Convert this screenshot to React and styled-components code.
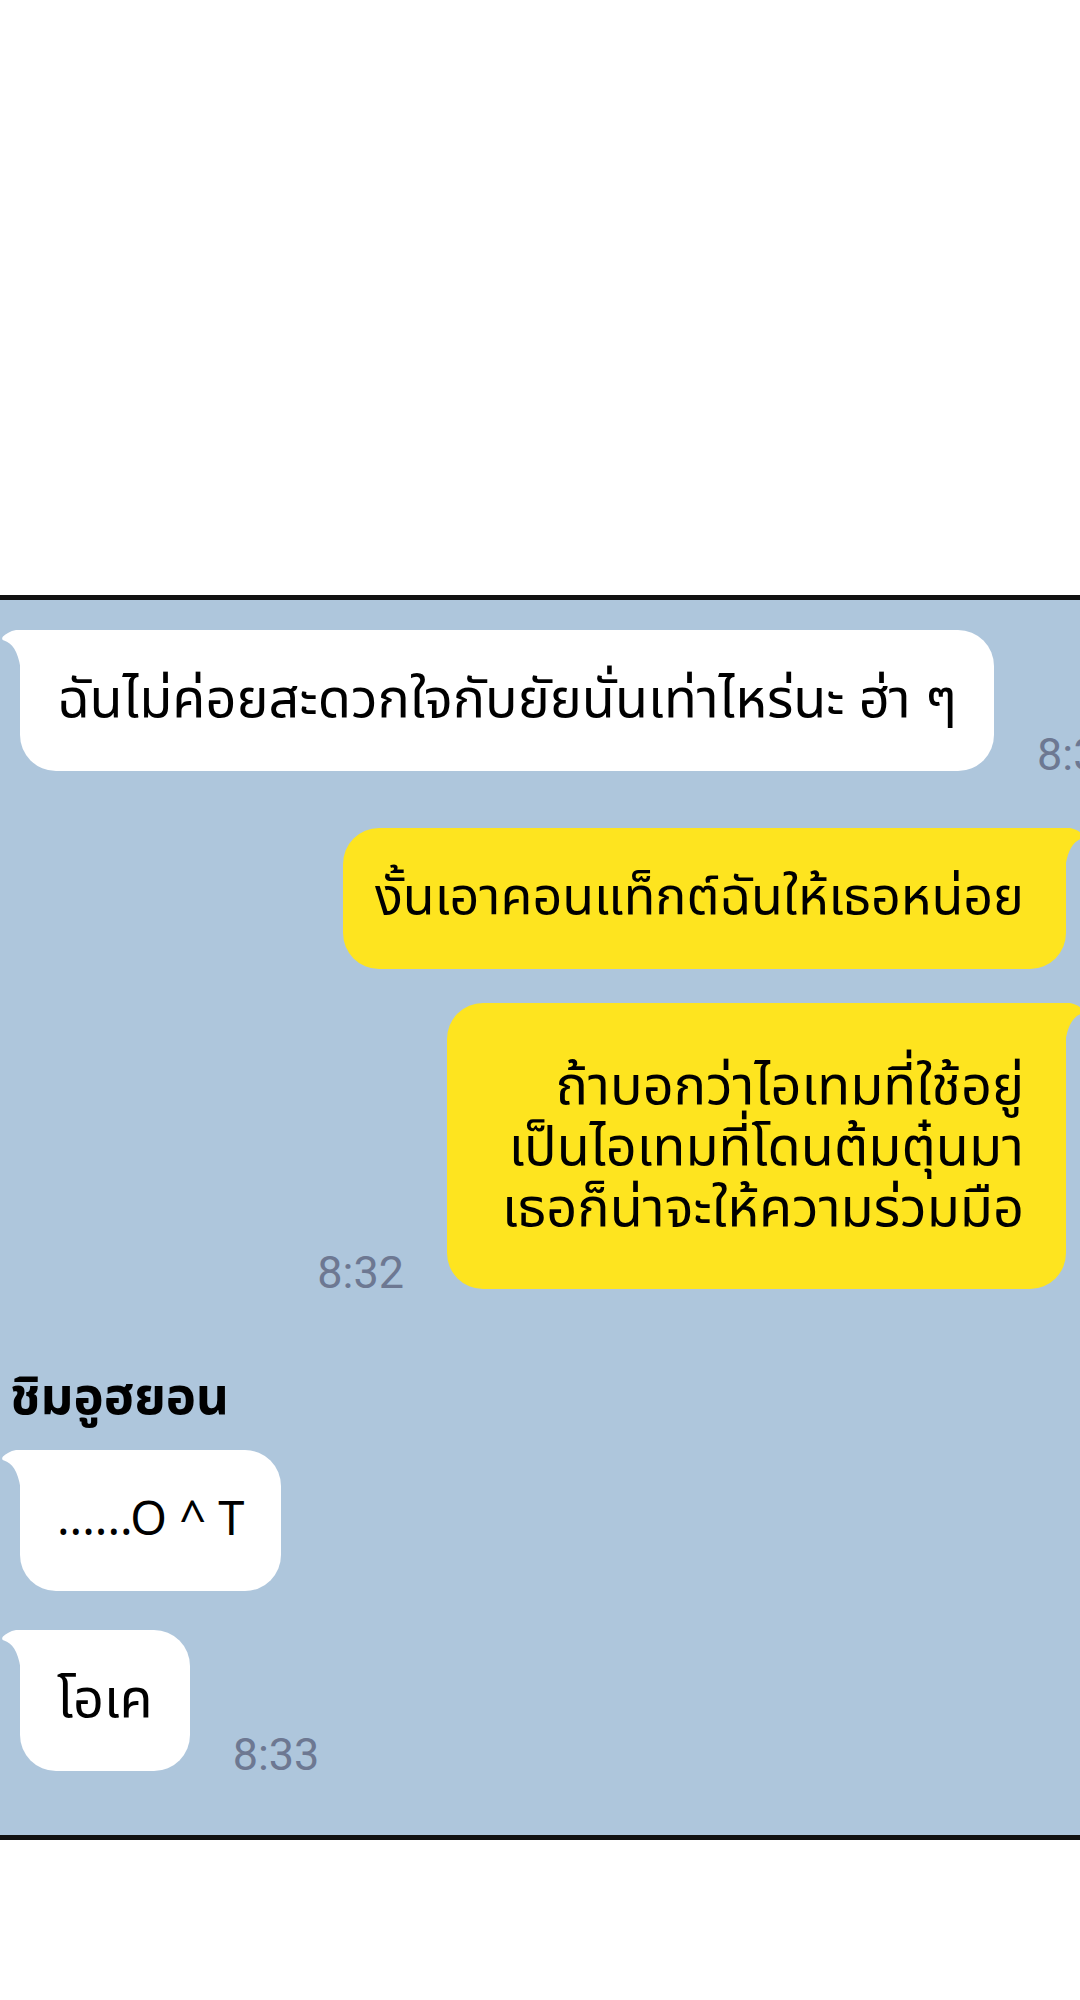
import styled, { createGlobalStyle } from "styled-components";

const GlobalStyle = createGlobalStyle`
  body {
    margin: 0;
    background: #ffffff;
    font-family: "Noto Sans Thai", "Noto Sans", "DejaVu Sans", sans-serif;
  }
`;

const Page = styled.div`
  width: 1080px;
  min-height: 2000px;
  background: #ffffff;
`;

const TopSpace = styled.div`
  height: 595px;
`;

const Panel = styled.section`
  border-top: 5px solid #111111;
  border-bottom: 5px solid #111111;
  background: #aec6dc;
  padding: 30px 0 64px;
  display: flex;
  flex-direction: column;
  overflow: hidden;
`;

const Row = styled.div`
  display: flex;
  align-items: flex-end;
  justify-content: ${(p) => (p.$out ? "flex-end" : "flex-start")};
  gap: 43px;
  margin-top: ${(p) => p.$top || 0}px;
  padding: ${(p) => (p.$out ? "0 14px 0 0" : "0 0 0 20px")};
`;

const Bubble = styled.div`
  position: relative;
  flex-shrink: 0;
  background: ${(p) => (p.$out ? "#fee41f" : "#ffffff")};
  color: #000000;
  border-radius: 36px;
  ${(p) => (p.$out ? "border-top-right-radius: 0;" : "border-top-left-radius: 0;")}
  padding: ${(p) => p.$pad || "40px 37px"};
  font-size: ${(p) => p.$size || 54}px;
  line-height: 61px;
  white-space: nowrap;
  text-align: ${(p) => (p.$out ? "right" : "left")};
`;

const TailSvg = styled.svg`
  position: absolute;
  top: 0;
  width: 24px;
  height: 40px;
  ${(p) => (p.$out ? "right: -20px; transform: scaleX(-1);" : "left: -20px;")}
`;

const Time = styled.span`
  flex-shrink: 0;
  font-family: Roboto, "Noto Sans", sans-serif;
  font-size: 45px;
  line-height: 1;
  color: #6d7892;
  margin-bottom: -6px;
`;

const Name = styled.div`
  margin: 80px 0 0 10px;
  font-size: 51px;
  font-weight: 700;
  line-height: 60px;
  color: #000000;
`;

const Tail = ({ out }) => (
  <TailSvg $out={out} viewBox="0 0 24 40">
    <path
      d="M24 0 L16 0 C10 1 6 4 3 6.5 C1.5 8 2 10 4 10.5 C12 13 18 21 20.5 38 L20.5 40 L24 40 Z"
      fill={out ? "#fee41f" : "#ffffff"}
    />
  </TailSvg>
);

const Message = ({ out, children, pad, size }) => (
  <Bubble $out={out} $pad={pad} $size={size}>
    <Tail out={out} />
    {children}
  </Bubble>
);

export default function App() {
  return (
    <Page>
      <GlobalStyle />
      <TopSpace />
      <Panel>
        <Row>
          <Message>ฉันไม่ค่อยสะดวกใจกับยัยนั่นเท่าไหร่นะ ฮ่า ๆ</Message>
          <Time>8:32</Time>
        </Row>
        <Row $out $top={57}>
          <Message out size={52} pad="40px 42px 40px 32px">
            งั้นเอาคอนแท็กต์ฉันให้เธอหน่อย
          </Message>
        </Row>
        <Row $out $top={34}>
          <Time>8:32</Time>
          <Message out pad="54px 42px 49px 55px">
            ถ้าบอกว่าไอเทมที่ใช้อยู่
            <br />
            เป็นไอเทมที่โดนต้มตุ๋นมา
            <br />
            เธอก็น่าจะให้ความร่วมมือ
          </Message>
        </Row>
        <Name>ชิมอูฮยอน</Name>
        <Row $top={21}>
          <Message size={47}>......O ^ T</Message>
        </Row>
        <Row $top={39}>
          <Message>โอเค</Message>
          <Time>8:33</Time>
        </Row>
      </Panel>
    </Page>
  );
}
